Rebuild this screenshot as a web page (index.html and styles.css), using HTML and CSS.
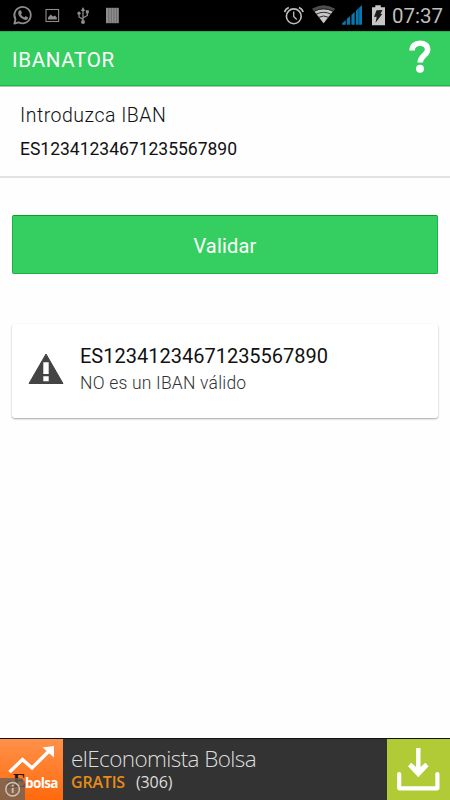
FILE: index.html
```html
<!DOCTYPE html>
<html lang="es">
  <head>
    <meta charset="UTF-8" />
    <title>IBANATOR</title>
    <meta name="viewport" content="width=device-width, initial-scale=1.0" />
    <link rel="stylesheet" href="styles.css">
  </head>
  <body>
    <div class="status">
      <svg class="status-icons" width="392" height="31" viewBox="0 0 392 31">
        <!-- whatsapp -->
        <g fill="none" stroke="#8c8c8c" stroke-width="1.8">
          <path d="M14.3 23.7l1.2-4.4a8.2 8.2 0 1 1 3.1 3z" stroke-linejoin="round" />
        </g>
        <path d="M19.2 10.6c.8-.7 1.5-.6 1.9.2l.8 1.9c.1.5-.6 1.1-1 1.6.8 1.5 1.9 2.5 3.4 3.1.5-.5 1-1.3 1.5-1.2l2 1c.5.4.2 1.6-.4 2.1-1.4 1.1-3.4.6-5.3-.7-1.7-1.1-3-2.6-3.6-4.2-.5-1.5-.2-2.9.7-3.8z" fill="#8c8c8c" />
        <!-- picture -->
        <rect x="46" y="9.5" width="12.6" height="12" fill="none" stroke="#8c8c8c" stroke-width="1.1" />
        <path d="M48 19.5v-2l2.7-2.9 2.3 2 2-1 1.8 1.8v2.1z" fill="#8c8c8c" />
        <!-- usb -->
        <g fill="none" stroke="#8c8c8c" stroke-width="1.3">
          <path d="M83 10v12M83 19.4l-4-2.4v-3M83 18l4.3-2.5V12" />
        </g>
        <path d="M83 7l-2.2 4h4.4zM85.8 10.2h3v3h-3z" fill="#8c8c8c" />
        <circle cx="79" cy="13.2" r="1.6" fill="#8c8c8c" />
        <circle cx="83" cy="22" r="2" fill="#8c8c8c" />
        <!-- bars -->
        <path d="M106 7.8h12.8v15.4H106z" fill="#8c8c8c" />
        <path d="M108.8 8v15M111.4 8v15M114 8v15M116.6 8v15" stroke="#606060" stroke-width=".7" />
        <!-- alarm -->
        <g fill="none" stroke="#bdbdbd" stroke-width="1.6">
          <circle cx="293.8" cy="16.3" r="7.4" />
          <path d="M293.7 11.5v5l3 3" stroke-width="1.3" />
          <path d="M284.6 12.2q.7-3.3 4.2-4.7M303.1 12.2q-.7-3.3-4.2-4.7" />
        </g>
        <!-- wifi -->
        <path d="M312 8.8q11.6-7 23.2 0L323.6 23.2z" fill="#4d4d4d" />
        <path d="M314.6 11.6q9-4.6 18 0L323.6 23.2z" fill="#c6c6c6" />
        <g fill="none" stroke="#1a1a1a" stroke-width=".9">
          <path d="M314 11.3q9.6-5 19.2 0M316 14.3q7.6-4 15.2 0M318.5 17.4q5.1-2.8 10.2 0" />
        </g>
        <!-- signal -->
        <path d="M342 24.8v-1.4l3.8-3.4v4.8zM346.8 24.8v-5.8l3.3-3v8.8zM351.4 24.8v-9.9l3.3-3v12.9zM356 24.8V10.8L362 5v19.8z" fill="#0877ae" />
        <path d="M358.8 8v17" stroke="#03354e" stroke-width=".6" />
        <!-- battery -->
        <path d="M375.3 5.2h5.5v2h4.2v18h-13v-18h3.3z" fill="#c6c6c6" />
        <path d="M376.5 10.2l6-.2-2 3.8 1.8.3-6.8 8.6 1.2-6-2.7.2z" fill="#1c1c1c" />
      </svg>
      <span class="time">07:37</span>
    </div>

    <header class="bar">
      <h1 class="title">IBANATOR</h1>
      <svg class="help" width="22" height="34" viewBox="0 0 22 34">
        <path d="M3.1 10.5C3.1 5.7 6.3 3.2 11 3.2s7.6 2.3 7.6 6.3c0 5.7-7.4 6-7.4 13" fill="none" stroke="#fff" stroke-width="5.6" />
        <circle cx="11" cy="28.8" r="4" fill="#fff" />
      </svg>
    </header>

    <section class="field">
      <label class="label" for="iban">Introduzca IBAN</label>
      <input class="iban" id="iban" type="text" value="ES12341234671235567890" />
    </section>

    <button class="btn-validate">Validar</button>

    <section class="card">
      <svg class="warning" width="36" height="32" viewBox="0 0 36 32">
        <path d="M18 1L35 30.5H1z" fill="#444" stroke="#444" stroke-linejoin="round" />
        <path d="M15.3 9.3h5.4v11.8h-5.4zM15.3 23.2h5.4v5h-5.4z" fill="#fff" />
      </svg>
      <div class="result">
        <p class="number">ES12341234671235567890</p>
        <p class="msg">NO es un IBAN válido</p>
      </div>
    </section>

    <footer class="ad">
      <div class="ad-logo">
        <svg class="trend" width="63" height="62" viewBox="0 0 63 62">
          <path d="M9.5 33L22.5 20.5l9.5 8.5L49 12" fill="none" stroke="#fff" stroke-width="3.4" />
          <path d="M42.5 8.5L54 7v11.5z" fill="#fff" />
        </svg>
        <span class="ad-e">e</span>
        <span class="ad-cap">E</span>
        <span class="ad-name">bolsa</span>
        <svg class="info" width="25" height="22" viewBox="0 0 25 22">
          <path d="M0 0h21l4 4v18H0z" fill="#696057" fill-opacity=".78" />
          <circle cx="12.6" cy="11.2" r="6.8" fill="none" stroke="#cfc1b2" stroke-width="1.5" />
          <path d="M12.7 10v5M12.7 6.7v1.8" stroke="#cfc1b2" stroke-width="1.8" />
        </svg>
      </div>
      <div class="ad-text">
        <p class="ad-title">elEconomista Bolsa</p>
        <p class="ad-info"><span class="free">GRATIS</span> <span class="count">(306)</span></p>
      </div>
      <div class="download">
        <svg width="63" height="62" viewBox="0 0 63 62">
          <path d="M12.2 35v14.3h38.2V35" fill="none" stroke="#fff" stroke-width="4.2" stroke-linejoin="round" stroke-linecap="round" />
          <path d="M31.3 9v22" stroke="#fff" stroke-width="4.4" />
          <path d="M21 27.2l3.2-3.5 4.9 4.3h4.4l4.9-4.3 3.2 3.5-10.3 11z" fill="#fff" />
        </svg>
      </div>
    </footer>
  </body>
</html>
```
FILE: styles.css
```css
* {
  box-sizing: border-box;
}
body {
  margin: 0;
  height: 800px;
  display: flex;
  flex-direction: column;
  background: #fefefe;
  font-family: Roboto, sans-serif;
  overflow: hidden;
}
h1,
p {
  margin: 0;
  font-weight: 400;
}
svg {
  display: block;
  flex: none;
}
.status {
  display: flex;
  height: 31px;
  background: #000;
}
.status .time {
  color: #bebebe;
  font-size: 20.5px;
  line-height: 33px;
}
.bar {
  display: flex;
  justify-content: space-between;
  height: 56px;
  padding: 0 19px 0 12px;
  background: #35ce60;
  border-top: 1px solid #20b94b;
  border-bottom: 1px solid #a5c9aa;
  box-shadow: inset 0 -1px 0 #20b94b;
}
.bar .title {
  color: white;
  font-size: 20.5px;
  line-height: 56px;
  letter-spacing: 0.7px;
}
.bar .help {
  margin-top: 8px;
}
.field {
  height: 91px;
  padding: 14px 20px 0;
  border-bottom: 2px solid #e2e2e2;
}
.field .label {
  display: block;
  color: #111;
  font-size: 19.5px;
  font-weight: 300;
  line-height: 29px;
  letter-spacing: 0.5px;
}
.field .iban {
  display: block;
  width: 100%;
  height: 28px;
  margin-top: 5px;
  padding: 0;
  border: none;
  outline: none;
  background: none;
  color: #111;
  font-family: inherit;
  font-size: 17.5px;
}
.btn-validate {
  flex: none;
  height: 59px;
  margin: 37px 12px 0;
  padding: 2px 0 0;
  border: 1px solid #19b348;
  border-top-color: #08a01c;
  border-radius: 2px;
  background: #35ce60;
  color: white;
  font-family: inherit;
  font-size: 20px;
  letter-spacing: 0.2px;
}
.card {
  display: flex;
  height: 94px;
  margin: 50px 12px 0;
  padding: 0 16px;
  border-radius: 3px;
  background: white;
  box-shadow: 0 1px 2px rgba(0, 0, 0, 0.35);
}
.card .warning {
  margin-top: 29px;
}
.card .result {
  margin: 18px 0 0 16px;
}
.card .number {
  color: #111;
  font-size: 20px;
  line-height: 28px;
}
.card .msg {
  color: #333;
  font-size: 17.5px;
  font-weight: 300;
  line-height: 26px;
  letter-spacing: 0.2px;
}
.ad {
  display: flex;
  height: 62px;
  margin-top: auto;
  background: #333;
  border-top: 1px solid #111;
}
.ad-logo {
  position: relative;
  flex: none;
  width: 63px;
  background: linear-gradient(#ff914a, #ff6a0c);
  font-family: "Open Sans", sans-serif;
  overflow: hidden;
}
.ad-logo .ad-e,
.ad-logo .ad-cap,
.ad-logo .ad-name {
  position: absolute;
}
.ad-logo .ad-e {
  left: 6px;
  top: 34px;
  color: #5b3526;
  font: bold 15px/20px "Liberation Serif", serif;
}
.ad-logo .ad-cap {
  left: 13px;
  top: 32px;
  color: #2a1410;
  font: bold 19px/20px "Liberation Serif", serif;
}
.ad-logo .ad-name {
  left: 25px;
  top: 34px;
  color: white;
  font-size: 13.5px;
  font-weight: 700;
  line-height: 20px;
  letter-spacing: -0.6px;
}
.ad-logo .info {
  position: absolute;
  left: 0;
  bottom: 0;
}
.ad-text {
  flex: 1;
  padding: 6px 0 0 8px;
  font-family: "Open Sans", sans-serif;
  color: #ddd;
}
.ad-title {
  font-size: 22.5px;
  font-weight: 300;
  line-height: 28px;
  letter-spacing: -0.6px;
}
.ad-info {
  display: flex;
  gap: 11px;
  font-size: 16px;
  line-height: 18px;
}
.ad-info .free {
  color: #e78c18;
  font-weight: 600;
  letter-spacing: -0.2px;
}
.ad-info .count {
  letter-spacing: -0.1px;
}
.download {
  flex: none;
  width: 63px;
  background: #b1cb37;
}
```
